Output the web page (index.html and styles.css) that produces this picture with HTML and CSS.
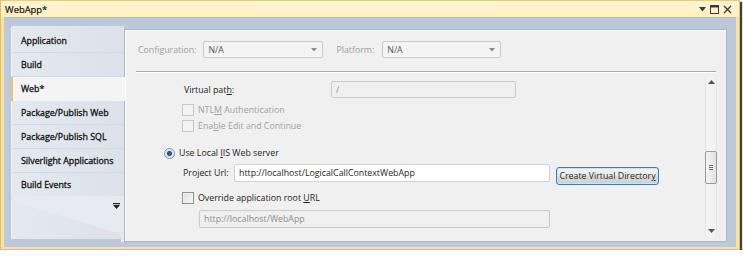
FILE: index.html
```html
<!DOCTYPE html>
<html lang="en">
<head>
    <meta charset="UTF-8">
    <title>WebApp* - Project Properties</title>
    <link rel="stylesheet" href="styles.css">
</head>
<body>

    <div class="window">
        <!-- Title bar -->
        <div class="titlebar">
            <span class="title">WebApp*</span>
            <div class="title-buttons">
                <svg width="7" height="5" viewBox="0 0 7 5"><path d="M0 0h7L3.5 4.5z" fill="#3b3b3b"/></svg>
                <svg width="9" height="9" viewBox="0 0 9 9"><rect x="0.5" y="0.5" width="8" height="8" fill="none" stroke="#3b3b3b"/><rect x="0.5" y="0.5" width="8" height="2" fill="#3b3b3b"/></svg>
                <svg width="9" height="9" viewBox="0 0 9 9"><path d="M1 1l7 7M8 1l-7 7" stroke="#3b3b3b" stroke-width="1.4"/></svg>
            </div>
        </div>

        <div class="frame">
            <!-- Side tabs -->
            <div class="tabs">
                <div class="tab">Application</div>
                <div class="tab">Build</div>
                <div class="tab selected">Web*</div>
                <div class="tab">Package/Publish Web</div>
                <div class="tab">Package/Publish SQL</div>
                <div class="tab">Silverlight Applications</div>
                <div class="tab last">Build Events</div>
                <div class="tabs-foot">
                    <svg class="overflow" width="7" height="6" viewBox="0 0 7 6"><rect x="0" y="0" width="7" height="1.2" fill="#222"/><path d="M0 2h7L3.5 6z" fill="#222"/></svg>
                </div>
            </div>

            <!-- Page -->
            <div class="panel">
                <div class="config-row">
                    <span class="muted">Configuration:</span>
                    <div class="combo combo-config"><span>N/A</span><svg width="6" height="4" viewBox="0 0 6 4"><path d="M0 0h6L3 3.5z" fill="#8a8a8a"/></svg></div>
                    <span class="muted platform-label">Platform:</span>
                    <div class="combo combo-platform"><span>N/A</span><svg width="6" height="4" viewBox="0 0 6 4"><path d="M0 0h6L3 3.5z" fill="#8a8a8a"/></svg></div>
                </div>
                <div class="separator"></div>

                <div class="scroll-area">
                    <div class="props">
                        <div class="row row-vpath">
                            <span class="vpath-label">Virtual pat<u>h</u>:</span>
                            <div class="textbox disabled vpath-box">/</div>
                        </div>
                        <div class="row row-check row-ntlm">
                            <span class="checkbox disabled"></span>
                            <span class="muted">NTL<u>M</u> Authentication</span>
                        </div>
                        <div class="row row-check">
                            <span class="checkbox disabled"></span>
                            <span class="muted">Ena<u>b</u>le Edit and Continue</span>
                        </div>
                        <div class="row row-radio">
                            <span class="radio"></span>
                            <span>Use Local <u>I</u>IS Web server</span>
                        </div>
                        <div class="row row-url">
                            <span class="url-label">Pro<u>j</u>ect Url:</span>
                            <div class="textbox url-box">http://localhost/LogicalCallContextWebApp</div>
                            <button class="btn">Create Virtual Director<u>y</u></button>
                        </div>
                        <div class="row row-check row-override">
                            <span class="checkbox"></span>
                            <span>Override application root <u>U</u>RL</span>
                        </div>
                        <div class="row row-approot">
                            <div class="textbox disabled approot-box">http://localhost/WebApp</div>
                        </div>
                    </div>

                    <div class="scrollbar">
                        <svg class="arrow" width="7" height="4" viewBox="0 0 7 4"><path d="M0 4h7L3.5 0z" fill="#555"/></svg>
                        <div class="track">
                            <div class="thumb"><span></span><span></span><span></span></div>
                        </div>
                        <svg class="arrow" width="7" height="4" viewBox="0 0 7 4"><path d="M0 0h7L3.5 4z" fill="#555"/></svg>
                    </div>
                </div>
            </div>
        </div>
    </div>

</body>
</html>
```

FILE: styles.css
```css
body {
    margin: 0;
    padding: 0;
    background: #ffffff;
    font-family: "Segoe UI", "Open Sans", "Noto Sans", sans-serif;
    font-size: 8.8px;
    color: #1e1e1e;
}

u {
    text-decoration-thickness: 1px;
    text-underline-offset: 1px;
}

/* Outer tool window */
.window {
    box-sizing: border-box;
    width: 740px;
    height: 250px;
    padding: 0 3px 3px 3px;
    background: #f7e3a0;
    border: 1px solid #dcc070;
    border-top: none;
    box-shadow: 2px 2px 1px rgba(30, 30, 30, 0.85);
}

.titlebar {
    height: 17px;
    margin: 0 -3px;
    padding: 0 7px 0 4px;
    display: flex;
    align-items: center;
    justify-content: space-between;
    background: linear-gradient(#fff6d6, #ffefbc);
    border-top: 1px solid #e6cc80;
    box-sizing: border-box;
}

.title {
    font-size: 9.4px;
    color: #111;
    -webkit-text-stroke: 0.2px #111;
}

.title-buttons {
    display: flex;
    align-items: center;
    gap: 4px;
}

.frame {
    height: 230px;
    box-sizing: border-box;
    display: flex;
    align-items: flex-start;
    padding: 8px 9px 6px 7px;
    background: #bdc8da;
    border-top: 1px solid #b0bccf;
}

/* Side tabs */
.tabs {
    width: 113px;
    flex-shrink: 0;
    padding-top: 3px;
    background: linear-gradient(90deg, #e4e8ef, #dde2ea);
    border-radius: 3px 0 0 0;
    box-shadow: inset 1px 0 #f2f4f8;
}

.tab {
    height: 24px;
    box-sizing: border-box;
    padding-left: 10px;
    display: flex;
    align-items: center;
    color: #111;
    -webkit-text-stroke: 0.3px #111;
    border-bottom: 1px solid #d3d9e3;
}

.tab.selected {
    position: relative;
    z-index: 1;
    margin-right: -1px;
    padding-left: 8px;
    background: #f4f4f4;
    border-left: 2px solid #e8c46e;
    border-bottom: none;
}

.tab.last {
    border-bottom: 1px solid #e6e9ef;
}

.tabs-foot {
    height: 45px;
    position: relative;
    background: #e7eaf0;
    clip-path: polygon(0 0, 100% 0, 100% 100%, 110px 100%, 110px 39px, 107px 36px, 0 4px);
    margin-bottom: -3px;
}

.tabs-foot .overflow {
    position: absolute;
    left: 102px;
    top: 6px;
}

/* Property page */
.panel {
    margin-top: 3px;
    width: 603px;
    height: 213px;
    box-sizing: border-box;
    background: #f0f0f0;
    border: 1px solid #a9b5c8;
    box-shadow: inset 1px 1px #ffffff;
    display: flex;
    flex-direction: column;
}

.muted {
    color: #a2a2a2;
}

.config-row {
    display: flex;
    align-items: center;
    padding: 11px 0 0 13px;
}

.combo {
    height: 17px;
    box-sizing: border-box;
    margin-left: 7px;
    padding: 0 5px 0 4px;
    display: flex;
    align-items: center;
    justify-content: space-between;
    background: #f4f4f4;
    border: 1px solid #cacaca;
    border-radius: 2px;
    color: #555;
}

.combo-config {
    width: 120px;
}

.combo-platform {
    width: 119px;
    margin-left: 8px;
}

.platform-label {
    margin-left: 13px;
}

.separator {
    margin: 13px 10px 0 11px;
    height: 1px;
    background: #a8a8a8;
    border-bottom: 1px solid #ffffff;
}

.scroll-area {
    flex: 1;
    display: flex;
    justify-content: space-between;
    padding-right: 9px;
}

.props {
    flex: 1;
    display: flex;
    flex-direction: column;
}

.row {
    display: flex;
    align-items: center;
}

.row-vpath {
    margin-top: 8px;
    padding-left: 59px;
}

.vpath-label {
    width: 147px;
}

.textbox {
    height: 18px;
    box-sizing: border-box;
    padding: 0 4px;
    display: flex;
    align-items: center;
    background: #ffffff;
    border: 1px solid #c2c5cb;
    border-radius: 2px;
    white-space: nowrap;
}

.textbox.disabled {
    background: #f0f0f0;
    border-color: #cbcbcb;
    color: #8d8d8d;
}

.vpath-box {
    width: 185px;
    height: 17px;
}

.row-check {
    height: 16px;
    padding-left: 57px;
}

.row-ntlm {
    margin-top: 4px;
}

.checkbox {
    width: 12px;
    height: 12px;
    box-sizing: border-box;
    margin-right: 4px;
    border: 1px solid #8f8f8f;
    background: linear-gradient(135deg, #dedede, #f8f8f8);
    box-shadow: inset 0 0 0 1px #f4f4f4;
}

.checkbox.disabled {
    border-color: #c7c7c7;
    background: #f3f3f3;
}

.row-radio {
    height: 16px;
    margin-top: 11px;
    padding-left: 39px;
}

.radio {
    width: 11px;
    height: 11px;
    box-sizing: border-box;
    margin-right: 4px;
    border-radius: 50%;
    border: 1px solid #8e8f8f;
    background: radial-gradient(circle, #2a6fb4 0, #174f8c 2px, #cfe2f4 3px, #eeeeee 4.5px);
}

.row-url {
    margin-top: 3px;
    padding-left: 58px;
    align-items: flex-start;
}

.url-label {
    width: 51px;
    height: 18px;
    display: flex;
    align-items: center;
}

.url-box {
    width: 316px;
    border-color: #d0d3d8;
}

.btn {
    margin-left: 6px;
    margin-top: 3px;
    width: 103px;
    height: 18px;
    padding: 0;
    font: inherit;
    white-space: nowrap;
    color: #1e1e1e;
    border: 1px solid #3c7fb1;
    border-radius: 3px;
    background: linear-gradient(#f3f3f3 0, #ebebeb 48%, #dddddd 52%, #cfcfcf 100%);
    box-shadow: inset 0 0 0 1px #c4e5f6;
}

.row-override {
    margin-top: 5px;
}

.row-approot {
    margin-top: 4px;
    padding-left: 74px;
}

.approot-box {
    width: 351px;
}

/* Vertical scrollbar */
.scrollbar {
    width: 12px;
    margin-top: 3px;
    margin-bottom: 4px;
    box-sizing: border-box;
    display: flex;
    flex-direction: column;
    align-items: center;
    background: #f3f3f3;
    border-left: 1px solid #e6e6e6;
    border-right: 1px solid #e6e6e6;
    padding: 4px 0;
}

.scrollbar .track {
    flex: 1;
    width: 100%;
    display: flex;
    flex-direction: column;
    justify-content: flex-start;
    padding-top: 67px;
    box-sizing: border-box;
}

.thumb {
    height: 33px;
    margin: 0 -1px;
    box-sizing: border-box;
    display: flex;
    flex-direction: column;
    align-items: center;
    justify-content: center;
    gap: 1px;
    border: 1px solid #9a9a9a;
    border-radius: 2px;
    background: linear-gradient(90deg, #f5f5f5, #e2e2e2);
}

.thumb span {
    width: 4px;
    height: 1px;
    background: #6b6b6b;
}
```
